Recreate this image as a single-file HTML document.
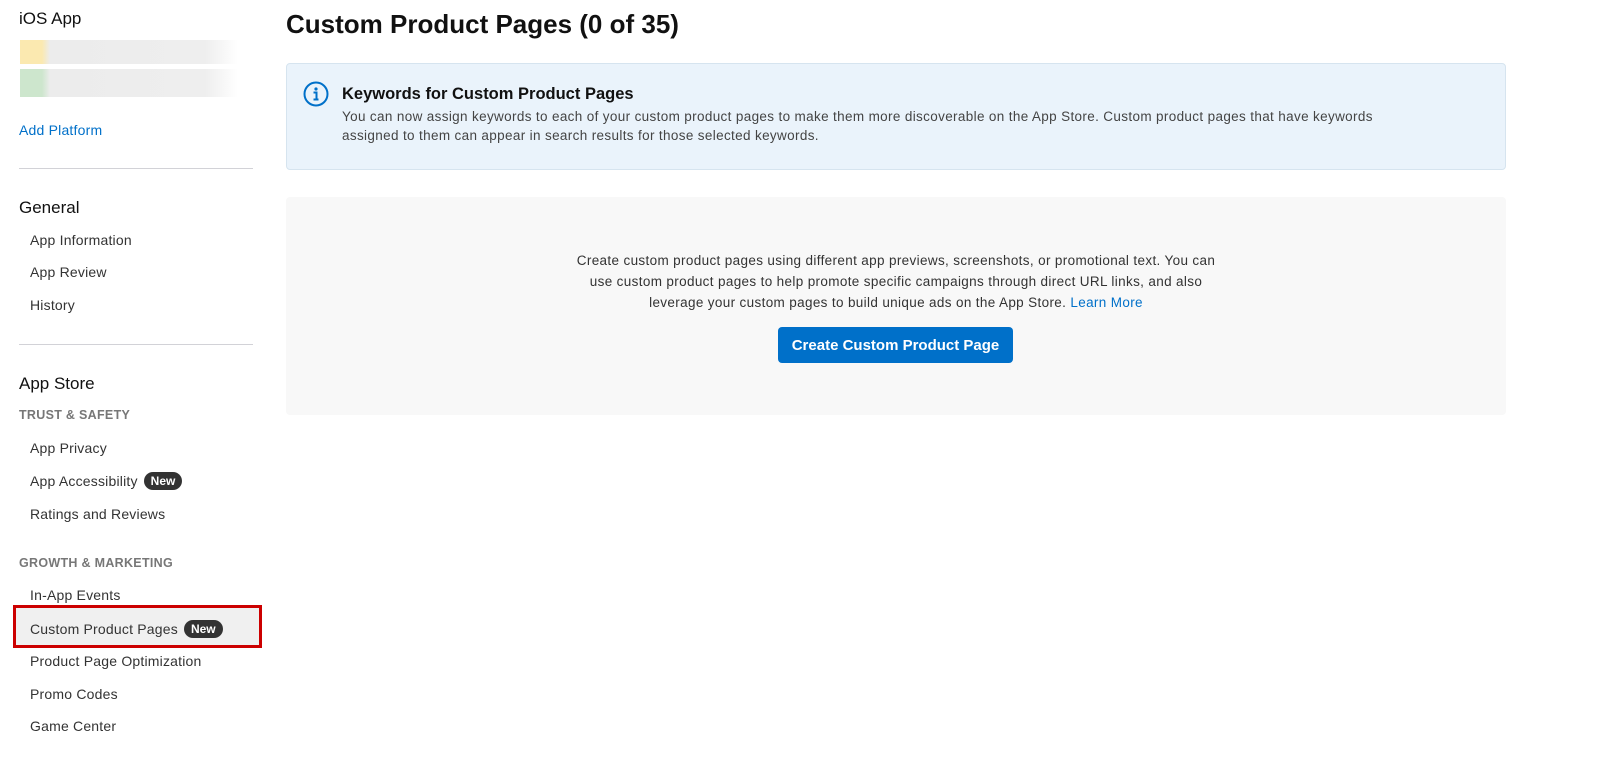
<!DOCTYPE html>
<html><head><style>
body{margin:0;width:1600px;height:781px;background:#fff;font-family:"Liberation Sans",sans-serif;color:#1d1d1f;position:relative;overflow:hidden}
.a{position:absolute;white-space:nowrap}
.item{font-size:14px;color:#333;left:30px;letter-spacing:.2px}
.hd{font-size:17px;left:19px;color:#111}
.cap{font-size:12.5px;color:#777;left:19px;font-weight:bold;letter-spacing:.3px}
.new{display:inline-block;background:#333;color:#fff;font-size:12px;font-weight:bold;border-radius:9px;padding:2px 7px;margin-left:6px;vertical-align:1px;letter-spacing:0}
.hr{position:absolute;left:19px;width:234px;height:1px;background:#d2d2d7}
</style></head><body>
<div class="a hd" style="top:9px">iOS App</div>
<div class="a" style="left:20px;top:40px;width:218px;height:24px;background:linear-gradient(90deg,#fbe9b0 0 22px,#ececec 30px,#eee 85%,#fff)"></div>
<div class="a" style="left:20px;top:69px;width:218px;height:28px;background:linear-gradient(90deg,#cde6cd 0 22px,#ececec 30px,#eee 85%,#fff)"></div>
<div class="a" style="left:19px;top:122px;font-size:14px;color:#0070c9;letter-spacing:.2px">Add Platform</div>
<div class="hr" style="top:168px"></div>
<div class="a hd" style="top:198px">General</div>
<div class="a item" style="top:232px">App Information</div>
<div class="a item" style="top:264px">App Review</div>
<div class="a item" style="top:297px">History</div>
<div class="hr" style="top:344px"></div>
<div class="a hd" style="top:374px">App Store</div>
<div class="a cap" style="top:408px">TRUST &amp; SAFETY</div>
<div class="a item" style="top:440px">App Privacy</div>
<div class="a item" style="top:472px">App Accessibility<span class="new">New</span></div>
<div class="a item" style="top:506px">Ratings and Reviews</div>
<div class="a cap" style="top:556px">GROWTH &amp; MARKETING</div>
<div class="a item" style="top:587px">In-App Events</div>
<div class="a" style="left:13px;top:605px;width:243px;height:37px;border:3px solid #c00;background:#f0f0f0"></div>
<div class="a item" style="top:620px">Custom Product Pages<span class="new">New</span></div>
<div class="a item" style="top:653px">Product Page Optimization</div>
<div class="a item" style="top:686px">Promo Codes</div>
<div class="a item" style="top:718px">Game Center</div>

<div class="a" style="left:286px;top:9px;font-size:26px;font-weight:bold;color:#111">Custom Product Pages (0 of 35)</div>
<div class="a" style="left:286px;top:63px;width:1218px;height:105px;background:#eaf3fb;border:1px solid #d6e4ef;border-radius:4px"></div>
<svg class="a" style="left:303px;top:81px" width="26" height="26" viewBox="0 0 26 26"><circle cx="13" cy="13" r="11.5" fill="none" stroke="#0070c9" stroke-width="2"/><circle cx="13" cy="8" r="1.6" fill="#0070c9"/><path d="M10.5 11.5h3v7M10.5 18.5h5" stroke="#0070c9" stroke-width="2" fill="none"/></svg>
<div class="a" style="left:342px;top:85px;font-size:16.5px;font-weight:bold;color:#111">Keywords for Custom Product Pages</div>
<div class="a" style="left:342px;top:107px;font-size:13.5px;color:#444;line-height:19px;white-space:normal;width:1090px;letter-spacing:.35px">You can now assign keywords to each of your custom product pages to make them more discoverable on the App Store. Custom product pages that have keywords assigned to them can appear in search results for those selected keywords.</div>
<div class="a" style="left:286px;top:197px;width:1220px;height:218px;background:#f8f8f8;border-radius:4px"></div>
<div class="a" style="left:571px;top:250px;width:650px;white-space:normal;text-align:center;font-size:13.5px;line-height:21px;color:#333;letter-spacing:.35px">Create custom product pages using different app previews, screenshots, or promotional text. You can use custom product pages to help promote specific campaigns through direct URL links, and also leverage your custom pages to build unique ads on the App Store. <span style="color:#0070c9">Learn More</span></div>
<div class="a" style="left:778px;top:327px;width:235px;height:36px;background:#0070c9;border-radius:4px;color:#fff;font-size:15px;font-weight:bold;text-align:center;line-height:37px">Create Custom Product Page</div>
</body></html>
